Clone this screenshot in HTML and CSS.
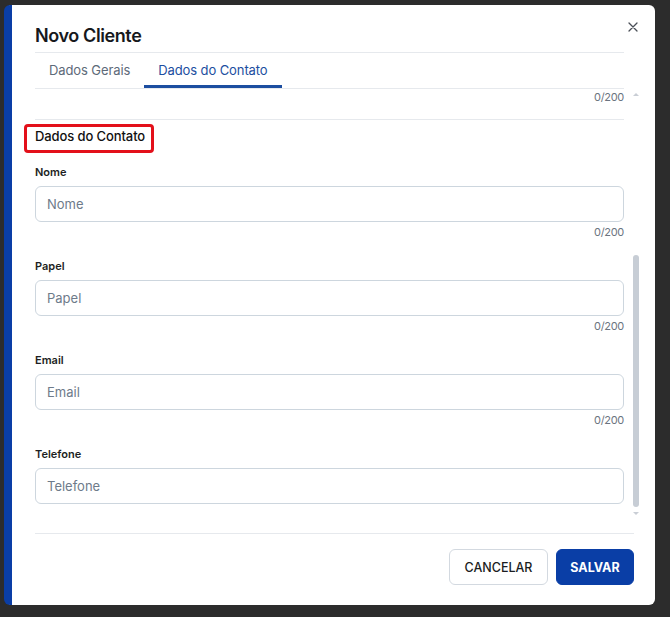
FILE: index.html
```html
<!DOCTYPE html>
<html lang="pt">
<head>
<meta charset="utf-8">
<link rel="stylesheet" href="styles.css">
</head>
<body>
<div class="dialog">
  <div class="header">
    <div class="title-wrap"><h2 class="title">Novo Cliente</h2></div>
    <button class="close" aria-label="Fechar">
      <svg width="10" height="10" viewBox="0 0 10 10"><path d="M1 1L9 9M9 1L1 9" stroke="#4a4f57" stroke-width="1.3" stroke-linecap="round"/></svg>
    </button>
  </div>
  <div class="tabs">
    <div class="tab">Dados Gerais</div>
    <div class="tab active">Dados do Contato</div>
  </div>
  <div class="body">
    <div class="content">
      <div class="counter">0/200</div>
      <div class="divider"></div>
      <div class="section-title"><span class="marked">Dados do Contato</span></div>
      <div class="field">
        <label class="label">Nome</label>
        <div class="input">Nome</div>
        <div class="counter">0/200</div>
      </div>
      <div class="field">
        <label class="label">Papel</label>
        <div class="input">Papel</div>
        <div class="counter">0/200</div>
      </div>
      <div class="field">
        <label class="label">Email</label>
        <div class="input">Email</div>
        <div class="counter">0/200</div>
      </div>
      <div class="field">
        <label class="label">Telefone</label>
        <div class="input">Telefone</div>
      </div>
    </div>
    <div class="scrollbar">
      <div class="arrow up"></div>
      <div class="thumb"></div>
      <div class="arrow down"></div>
    </div>
  </div>
  <div class="footer">
    <button class="btn btn-outline">CANCELAR</button>
    <button class="btn btn-primary">SALVAR</button>
  </div>
</div>
</body>
</html>
```
FILE: styles.css
```css
* { box-sizing: border-box; }
html, body { margin: 0; padding: 0; }
body {
  background: #2c2c2c;
  width: 670px;
  height: 617px;
  overflow: hidden;
  font-family: Inter, "Noto Sans", "Liberation Sans", sans-serif;
  color: #1b1d21;
}
.dialog {
  margin: 5px 0 0 4px;
  width: 651px;
  height: 600px;
  background: #fff;
  border-left: 8px solid #0a3ea6;
  border-radius: 6px;
  padding: 0 16px 20px 23px;
  display: flex;
  flex-direction: column;
}
.header {
  display: flex;
  align-items: flex-start;
}
.title-wrap {
  flex: 1;
  padding-top: 19px;
  padding-bottom: 4px;
  border-bottom: 1px solid #e6e9ed;
}
.title {
  margin: 0;
  font-size: 18px;
  line-height: 24px;
  font-weight: 600;
  color: #16181c;
  letter-spacing: -0.4px;
}
.close {
  width: 15px;
  margin-top: 17px;
  padding: 0 0 0 3px;
  border: 0;
  background: none;
  line-height: 0;
}
.tabs {
  display: flex;
  margin-right: 15px;
  border-bottom: 1px solid #e6e9ed;
}
.tab {
  padding: 7px 14px 5px;
  font-size: 13px;
  line-height: 20px;
  color: #5d6a79;
  letter-spacing: -0.1px;
  border-bottom: 3px solid transparent;
}
.tab.active {
  color: #1c4ea0;
  border-bottom-color: #1c4ea0;
}
.body {
  flex: 1;
  display: flex;
}
.content {
  flex: 1;
}
.counter {
  font-size: 11px;
  line-height: 16px;
  color: #6b7480;
  text-align: right;
  letter-spacing: -0.3px;
}
.field .counter { margin-top: 2px; }
.divider {
  margin-top: 14px;
  height: 1px;
  background: #e6e9ed;
}
.section-title {
  margin-top: 6px;
  font-size: 13px;
  line-height: 20px;
  font-weight: 500;
  color: #111;
  letter-spacing: -0.1px;
}
.marked {
  position: relative;
  display: inline-block;
}
.marked::after {
  content: "";
  position: absolute;
  left: -11px;
  right: -9px;
  top: -2px;
  bottom: -7px;
  border: 3px solid #e3101a;
  border-radius: 4px;
}
.field { margin-top: 18px; }
.label {
  display: block;
  font-size: 11px;
  line-height: 16px;
  font-weight: 600;
  color: #1d1f23;
}
.input {
  margin-top: 6px;
  height: 36px;
  border: 1px solid #cdd6de;
  border-radius: 6px;
  padding: 0 11px;
  font-size: 13px;
  line-height: 34px;
  color: #6e7b8a;
}
.scrollbar {
  width: 15px;
  padding-left: 9px;
  padding-top: 4px;
  display: flex;
  flex-direction: column;
}
.arrow {
  width: 0;
  height: 0;
  border-left: 3px solid transparent;
  border-right: 3px solid transparent;
}
.arrow.up { border-bottom: 3px solid #c9ced5; }
.arrow.down { border-top: 3px solid #c9ced5; margin-top: 5px; }
.thumb {
  margin-top: 159px;
  width: 6px;
  height: 252px;
  background: #c7cdd5;
  border-radius: 3px;
}
.footer {
  margin-right: 5px;
  border-top: 1px solid #e6e9ed;
  padding-top: 15px;
  display: flex;
  justify-content: flex-end;
  gap: 8px;
}
.btn {
  height: 36px;
  border-radius: 6px;
  font-family: Inter, "Noto Sans", "Liberation Sans", sans-serif;
  font-size: 12.5px;
  padding: 0;
}
.btn-outline {
  width: 99px;
  background: #fff;
  border: 1px solid #d3d9e0;
  color: #1b1d21;
  font-weight: 500;
}
.btn-primary {
  width: 78px;
  background: #0a3ea6;
  border: 1px solid #0a3ea6;
  color: #fff;
  font-weight: 700;
}
```
